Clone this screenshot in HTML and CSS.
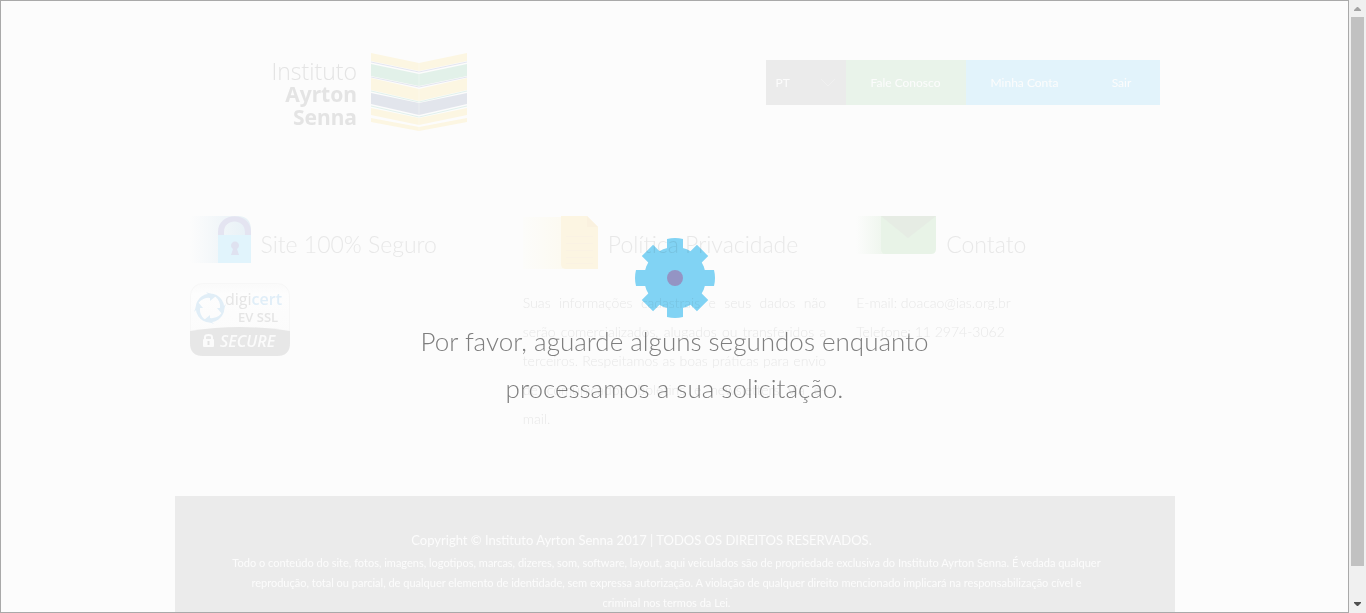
FILE: index.html
```html
<!DOCTYPE html>
<html lang="pt-BR">
<head>
<meta charset="utf-8">
<meta name="viewport" content="width=device-width, initial-scale=1">
<title>Instituto Ayrton Senna</title>
<link rel="stylesheet" href="styles.css">
</head>
<body>
<div class="window">
  <div class="viewport">
    <div class="page">
      <header class="header">
        <a class="brand" href="#">
          <span class="brand-name"><span class="brand-light">Instituto</span><span>Ayrton</span><span>Senna</span></span>
          <svg class="brand-flag" viewBox="0 0 96 80" aria-hidden="true">
            <g fill="#fcf6e2">
              <path d="M0 1 48 11 96 1V9L48 19 0 9z"/>
              <path d="M0 26 48 37 96 26V38L48 49 0 38z"/>
              <path d="M0 56 48 66 96 56V63L48 73 0 63z"/>
              <path d="M0 66 48 75 96 66V70L48 79 0 70z"/>
            </g>
            <path fill="#e2f1e9" d="M0 12 48 22 96 12V24L48 34 0 24z"/>
            <path fill="#e2e5ec" d="M0 41 48 51 96 41V52L48 63 0 52z"/>
            <g fill="none" stroke-width="1">
              <path stroke="#e4e6f0" d="M0 10 48 20 96 10M0 25 48 35 96 25"/>
              <path stroke="#e1f1ec" d="M0 39 48 50 96 39M0 54 48 65 96 54"/>
            </g>
            <path stroke="#fcfcfc" stroke-opacity=".3" d="M48 10V79"/>
          </svg>
        </a>
        <nav class="nav">
          <div class="language">
            <select class="language-select" aria-label="Idioma"><option>PT</option></select>
            <svg class="language-arrow" viewBox="0 0 16 9" aria-hidden="true"><path d="M1 1 8 8 15 1" fill="none" stroke="#f0f0f0"/></svg>
          </div>
          <a class="nav-link nav-contact" href="#">Fale Conosco</a>
          <a class="nav-link nav-account" href="#">Minha Conta</a>
          <a class="nav-link nav-exit" href="#">Sair</a>
        </nav>
      </header>

      <main class="columns">
        <section class="column">
          <div class="heading">
            <svg class="icon-lock" viewBox="0 0 61 48" aria-hidden="true">
              <defs><linearGradient id="blue"><stop offset="0" stop-color="#fcfcfc"/><stop offset="1" stop-color="#e6f0f6"/></linearGradient></defs>
              <path fill="url(#blue)" d="M0 0H49Q61 1 61 14V47H0z"/>
              <path fill="#e1f4fc" d="M28 19H61V47H28z"/>
              <path fill="#e4e4f1" d="M28 19V16C28-5 61-5 61 16V19H55V16C55 2 34 2 34 16V19z"/>
              <path fill="#dfe2f0" d="M43 33A4 4 0 1 1 47 33L49 39H41z"/>
            </svg>
            <h2 class="title">Site 100% Seguro</h2>
          </div>
          <svg class="seal" viewBox="0 0 100 73" role="img" aria-label="digicert EV SSL SECURE">
            <defs><linearGradient id="seal-bg" x2="0" y2="1"><stop offset="0" stop-color="#fafafa"/><stop offset=".15" stop-color="#fdfdfd"/><stop offset="1" stop-color="#fafafa"/></linearGradient></defs>
            <rect x=".5" y=".5" width="99" height="72" rx="12" fill="url(#seal-bg)" stroke="#f7f7f7"/>
            <path fill="#e7e7e7" d="M0 48Q50 40 100 48V60Q100 73 87 73H13Q0 73 0 60z"/>
            <g fill="#e1eef7">
              <path d="M7 31A14 14 0 0 1 18 11L16 9 26 13 20 18V15A12 12 0 0 0 7 31z"/>
              <path d="M7 31A14 14 0 0 1 18 11L16 9 26 13 20 18V15A12 12 0 0 0 7 31z" transform="rotate(90 20 25)"/>
              <path d="M7 31A14 14 0 0 1 18 11L16 9 26 13 20 18V15A12 12 0 0 0 7 31z" transform="rotate(180 20 25)"/>
              <path d="M7 31A14 14 0 0 1 18 11L16 9 26 13 20 18V15A12 12 0 0 0 7 31z" transform="rotate(270 20 25)"/>
            </g>
            <text class="seal-brand" x="35" y="22">digi<tspan class="seal-cert">cert</tspan></text>
            <text class="seal-level" x="48" y="39">EV SSL</text>
            <text class="seal-secure" x="30" y="64">SECURE</text>
            <rect x="13" y="56" width="11" height="8" rx="1" fill="#fbfbfb"/>
            <path d="M15 57V54Q15 52 18.500 52T22 54V57" fill="none" stroke="#fbfbfb" stroke-width="2"/>
            <path d="M18.500 58V62" stroke="#e2e2e2" stroke-width="2"/>
          </svg>
        </section>

        <section class="column">
          <div class="heading">
            <svg class="icon-paper" viewBox="0 0 75 54" aria-hidden="true">
              <defs><linearGradient id="yellow"><stop offset="0" stop-color="#fcfcfa"/><stop offset="1" stop-color="#fcfaf1"/></linearGradient></defs>
              <path fill="url(#yellow)" d="M0 1H40V53H0z"/>
              <path fill="#fcf5e2" d="M38 0H64L75 11V53H43Q38 53 38 48z"/>
              <path fill="#faf1df" d="M64 0 75 11H64z"/>
              <path stroke="#faf2e3" d="M43 20.500H70M43 27.500H70M43 34.500H70M43 41.500H70M43 47.500H70"/>
            </svg>
            <h2 class="title">Política Privacidade</h2>
          </div>
          <p class="text text-policy"><span class="justified">Suas informações cadastrais e seus dados não serão comercializados, alugados ou transferidos a terceiros. Respeitamos as boas práticas para envio de comunicados, boletins e newsletters via e-</span>mail.</p>
        </section>

        <section class="column">
          <div class="heading">
            <svg class="icon-mail" viewBox="0 0 80 39" aria-hidden="true">
              <defs><linearGradient id="green"><stop offset="0" stop-color="#fcfcfc"/><stop offset="1" stop-color="#edf5ec"/></linearGradient></defs>
              <path fill="url(#green)" d="M0 0H30V38H0z"/>
              <path fill="#e8f3e7" d="M25 0H80V33Q80 38 75 38H30Q25 38 25 33z"/>
              <path fill="#e6ece4" d="M25 0H80L52 22z"/>
            </svg>
            <h2 class="title">Contato</h2>
          </div>
          <p class="text">E-mail: doacao@ias.org.br<br>Telefone: 11 2974-3062</p>
        </section>
      </main>

      <footer class="footer">
        <p class="copyright">Copyright © Instituto Ayrton Senna 2017 | TODOS OS DIREITOS RESERVADOS.</p>
        <p class="legal">Todo o conteúdo do site, fotos, imagens, logotipos, marcas, dizeres, som, software, layout, aqui veiculados são de propriedade exclusiva do Instituto Ayrton Senna. É vedada qualquer<br>reprodução, total ou parcial, de qualquer elemento de identidade, sem expressa autorização. A violação de qualquer direito mencionado implicará na responsabilização cível e<br>criminal nos termos da Lei.</p>
      </footer>
    </div>

    <div class="loading" role="status">
      <svg class="gear" viewBox="-40 -40 80 80" aria-hidden="true">
        <g fill="#83d6f7">
          <circle r="31"/>
          <path d="M-8-39Q0-41 8-39V39Q0 41-8 39z"/>
          <path d="M-8-39Q0-41 8-39V39Q0 41-8 39z" transform="rotate(90)"/>
          <path d="M-8-39 8-39V39L-8 39z" transform="rotate(45)"/>
          <path d="M-8-39 8-39V39L-8 39z" transform="rotate(-45)"/>
        </g>
        <circle r="8" fill="#9696c7"/>
      </svg>
      <p class="message">Por favor, aguarde alguns segundos enquanto<br>processamos a sua solicitação.</p>
    </div>
  </div>

  <div class="scrollbar" aria-hidden="true">
    <svg class="scroll-arrow" viewBox="0 0 17 17"><path fill="#a3a3a3" d="M5 11V10L8 7H9L12 10V11z"/></svg>
    <div class="scroll-thumb"></div>
    <svg class="scroll-arrow" viewBox="0 0 17 17"><path fill="#505050" d="M5 6V7L8 10H9L12 7V6z"/></svg>
  </div>
</div>
</body>
</html>
```
FILE: styles.css
```css
* {
  box-sizing: border-box;
}

body {
  margin: 0;
  background: #fcfcfc;
  font-family: Lato, "Open Sans", sans-serif;
  font-weight: 300;
}

h2,
p {
  margin: 0;
}

a {
  color: inherit;
  text-decoration: none;
}

.window {
  display: grid;
  grid-template-columns: minmax(0, 1fr) 17px;
  height: 100vh;
}

.viewport {
  position: relative;
  overflow: hidden;
  border: 1px solid #a9a9a9;
}

.page {
  max-width: 1000px;
  margin: 0 auto;
}

.header {
  display: flex;
  justify-content: space-between;
  align-items: flex-start;
  padding: 51px 15px 0 97px;
  height: 215px;
}

.brand {
  display: flex;
  gap: 14px;
}

.brand-name {
  display: flex;
  flex-direction: column;
  padding-top: 8px;
  color: #e4e4e4;
  font: 700 21px/23px "Noto Sans", sans-serif;
  text-align: right;
}

.brand-light {
  font-weight: 300;
  font-size: 23px;
  font-family: "Open Sans", sans-serif;
}

.brand-flag {
  width: 96px;
  height: 80px;
}

.nav {
  display: flex;
  height: 45px;
  margin-top: 8px;
  color: #fcfcfc;
  font-size: 12px;
  font-weight: 400;
  line-height: 45px;
}

.language {
  position: relative;
  width: 80px;
  background: #ebebeb;
}

.language-select {
  width: 100%;
  height: 100%;
  padding: 0 10px;
  border: 0;
  background: none;
  color: inherit;
  font: inherit;
  appearance: none;
}

.language-arrow {
  position: absolute;
  top: 18px;
  right: 10px;
  width: 16px;
  height: 9px;
  pointer-events: none;
}

.nav-link {
  text-align: center;
}

.nav-contact {
  width: 120px;
  background: #e9f3ea;
}

.nav-account {
  width: 118px;
  background: #e2f3fb;
}

.nav-exit {
  width: 76px;
  background: #e2f3fb;
}

.columns {
  display: grid;
  grid-template-columns: repeat(3, minmax(0, 1fr));
  height: 280px;
}

.column {
  padding: 0 15px;
}

.heading {
  display: flex;
  align-items: flex-start;
  gap: 10px;
  height: 67px;
}

.icon-lock {
  width: 61px;
  height: 48px;
}

.icon-paper {
  width: 75px;
  height: 54px;
}

.icon-mail {
  width: 80px;
  height: 39px;
}

.title {
  padding-top: 12px;
  color: #e8e8e8;
  font-size: 23px;
  font-weight: 300;
  line-height: 32px;
  white-space: nowrap;
}

.seal {
  display: block;
  width: 100px;
  height: 73px;
}

.seal-brand,
.seal-level,
.seal-secure {
  font-family: "Open Sans", sans-serif;
  font-weight: 400;
  fill: #e5e5e5;
}

.seal-brand {
  font-size: 16px;
}

.seal-cert {
  font-weight: 600;
  fill: #e0eef8;
}

.seal-level {
  font-size: 13px;
  font-weight: 600;
}

.seal-secure {
  font-size: 16px;
  font-style: italic;
  font-weight: 600;
  fill: #fbfbfb;
}

.text {
  padding-top: 5px;
  color: #e8e8e8;
  font-size: 14px;
  line-height: 29px;
}

.text-policy {
  text-align: justify;
}

.justified {
  display: block;
  text-align-last: justify;
}

.footer {
  min-height: 160px;
  padding: 32px 50px 0;
  background: #ebebeb;
  color: #fcfcfc;
  text-align: center;
}

.copyright {
  padding-right: 66px;
  font-size: 13px;
  font-weight: 400;
  line-height: 24px;
}

.legal {
  margin-top: 1px;
  padding-right: 16px;
  font-size: 11px;
  font-weight: 400;
  line-height: 20px;
  white-space: nowrap;
}

.loading {
  position: absolute;
  inset: 0;
  display: flex;
  flex-direction: column;
  align-items: center;
  padding-top: 237px;
  mix-blend-mode: multiply;
}

.gear {
  width: 80px;
  height: 80px;
}

.message {
  color: #808080;
  font-size: 26px;
  line-height: 47px;
  text-align: center;
}

.scrollbar {
  display: flex;
  flex-direction: column;
  background: #f0f0f0;
}

.scroll-arrow {
  width: 17px;
  height: 17px;
}

.scroll-thumb {
  flex: 1;
  margin: 0 2px 30px;
  background: #c1c1c1;
}
```
